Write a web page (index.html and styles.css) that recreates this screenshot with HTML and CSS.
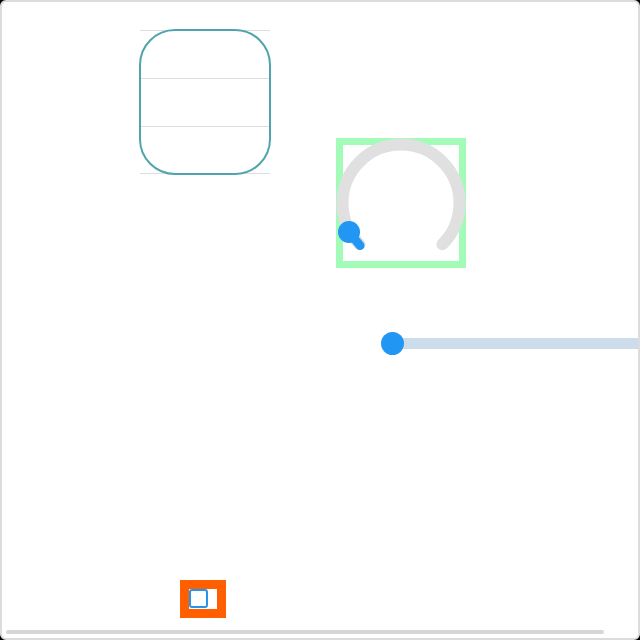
FILE: index.html
```html
<!DOCTYPE html>
<html>
<head>
<meta charset="utf-8">
<link rel="stylesheet" href="styles.css">
</head>
<body>
<div class="frame">
  <div class="row-top">
    <div class="list-wrap">
      <div class="list">
        <div class="item"></div>
        <div class="item"></div>
        <div class="item"></div>
      </div>
      <div class="outline"></div>
    </div>
    <div class="knob">
      <svg width="130" height="130" viewBox="0 0 130 130">
        <path d="M 23.63 106.37 A 58.5 58.5 0 1 1 106.37 106.37" fill="none" stroke="#e0e0e0" stroke-width="12" stroke-linecap="round"/>
        <line x1="13" y1="94" x2="24" y2="107.5" stroke="#2196f3" stroke-width="9" stroke-linecap="round"/>
        <circle cx="13" cy="94" r="11" fill="#2196f3"/>
      </svg>
    </div>
  </div>
  <div class="slider">
    <div class="track"></div>
    <div class="thumb"></div>
  </div>
  <div class="check-row">
    <label class="check-box"><span class="check"></span></label>
  </div>
  <div class="hscroll"></div>
</div>
</body>
</html>
```
FILE: styles.css
```css
html {
  background: #000;
}
body {
  margin: 0;
  font-family: "Liberation Sans", Arial, sans-serif;
}
.frame {
  width: 640px;
  height: 640px;
  box-sizing: border-box;
  border: 2px solid #dcdcdc;
  border-radius: 6px;
  background: #fff;
  overflow: hidden;
}
.row-top {
  display: flex;
  align-items: flex-start;
  margin-top: 27px;
  padding-left: 137px;
}
.list-wrap {
  position: relative;
  width: 132px;
  height: 146px;
  flex: none;
}
.list {
  padding: 1px 1px 0 1px;
}
.item {
  height: 48px;
  box-sizing: border-box;
  border-top: 1px solid #dedede;
}
.item:last-child {
  height: 48px;
  border-bottom: 1px solid #dedede;
}
.outline {
  position: absolute;
  inset: 0;
  border: 2px solid #50a5ac;
  border-radius: 36px;
}
.knob {
  flex: none;
  width: 130px;
  height: 130px;
  margin-left: 65px;
  margin-top: 109px;
  box-shadow: inset 0 0 0 7px #a3fbb8;
}
.knob svg {
  display: block;
}
.slider {
  position: relative;
  width: 300px;
  height: 23px;
  margin-top: 64px;
  margin-left: 379px;
  display: flex;
  align-items: center;
}
.track {
  margin-left: 11px;
  flex: 1;
  height: 11px;
  background: #ccdcea;
}
.thumb {
  position: absolute;
  left: 0;
  top: 0;
  width: 23px;
  height: 23px;
  border-radius: 50%;
  background: #2196f3;
}
.check-row {
  margin-top: 225px;
  padding-left: 178px;
  height: 38px;
}
.check-box {
  display: inline-flex;
  border: 9px solid #ff5f00;
  background: #fff;
  padding: 0 9px 1px 0;
}
.check {
  width: 19px;
  height: 19px;
  box-sizing: border-box;
  border: 2px solid #2196f3;
  border-radius: 3px;
  background: #fff;
}
.hscroll {
  margin-top: 12px;
  margin-left: 4px;
  width: 598px;
  height: 4px;
  border-radius: 2px;
  background: #d6d6d6;
}
```
